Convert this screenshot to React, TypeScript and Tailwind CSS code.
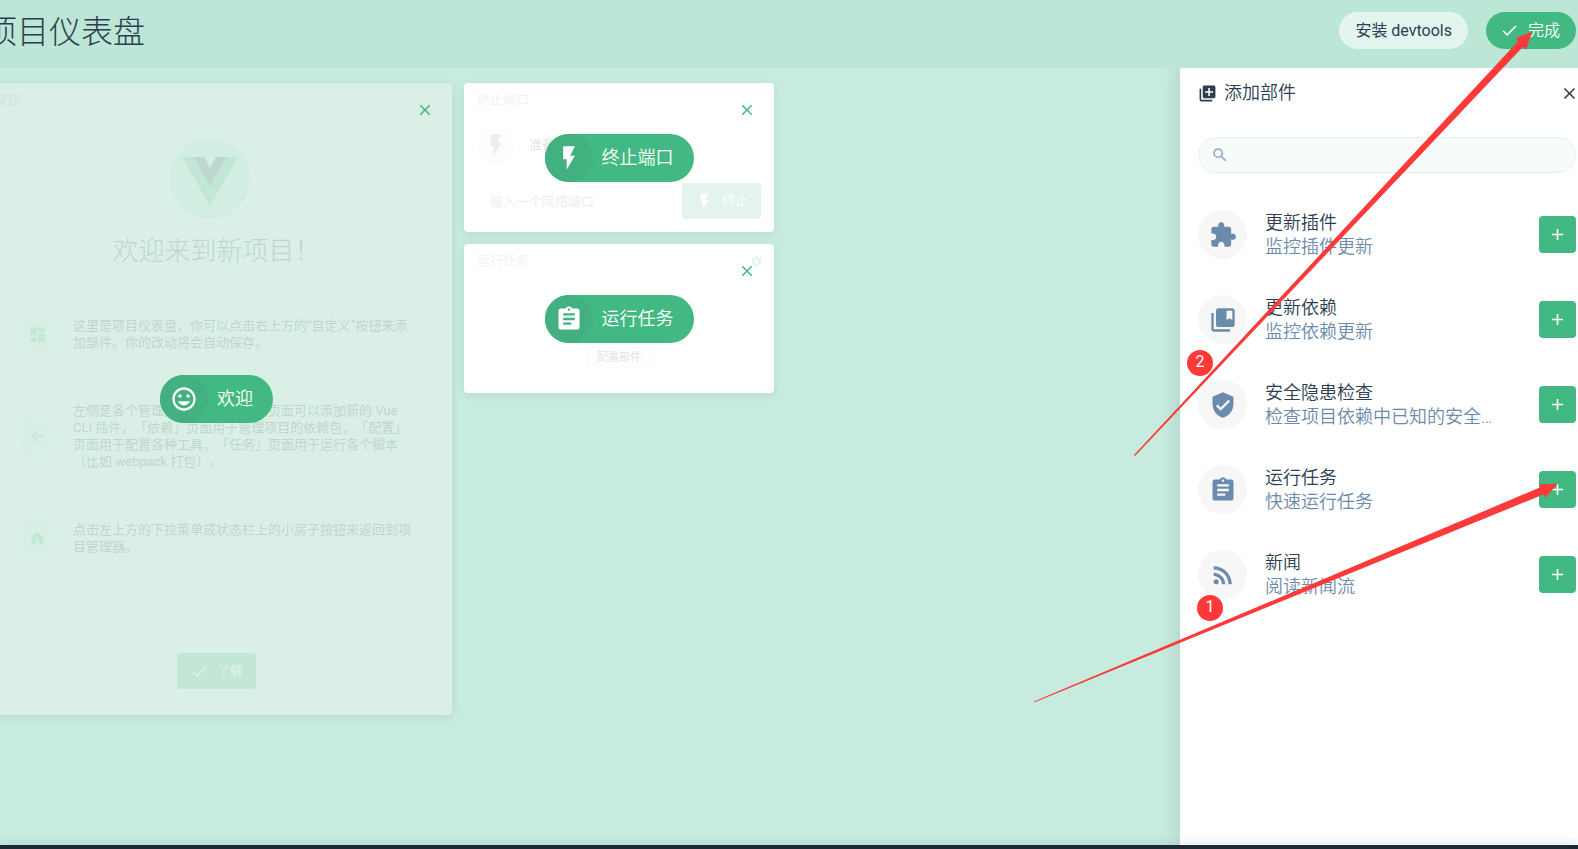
import { ReactNode, useState } from 'react';
import { IconType } from 'react-icons';
import {
  MdAdd,
  MdArrowBack,
  MdAssignment,
  MdClose,
  MdCollectionsBookmark,
  MdDashboard,
  MdDone,
  MdExtension,
  MdFlashOn,
  MdHome,
  MdInsertEmoticon,
  MdLibraryAdd,
  MdRssFeed,
  MdSearch,
  MdSettings,
  MdVerifiedUser,
} from 'react-icons/md';

interface WidgetDefinition {
  title: string;
  description: string;
  icon: IconType;
}

const definitions: WidgetDefinition[] = [
  { title: '更新插件', description: '监控插件更新', icon: MdExtension },
  { title: '更新依赖', description: '监控依赖更新', icon: MdCollectionsBookmark },
  { title: '安全隐患检查', description: '检查项目依赖中已知的安全隐患', icon: MdVerifiedUser },
  { title: '运行任务', description: '快速运行任务', icon: MdAssignment },
  { title: '新闻', description: '阅读新闻流', icon: MdRssFeed },
];

const tips: { icon: IconType; text: string }[] = [
  { icon: MdDashboard, text: '这里是项目仪表盘，你可以点击右上方的“自定义”按钮来添加部件。你的改动将会自动保存。' },
  {
    icon: MdArrowBack,
    text: '左侧是各个管理页面，在「插件」页面可以添加新的 Vue CLI 插件，「依赖」页面用于管理项目的依赖包，「配置」页面用于配置各种工具，「任务」页面用于运行各个脚本（比如 webpack 打包）。',
  },
  { icon: MdHome, text: '点击左上方的下拉菜单或状态栏上的小房子按钮来返回到项目管理器。' },
];

function VueLogo() {
  return (
    <svg viewBox="0 0 80 80" className="w-20 h-20" aria-hidden="true">
      <circle cx="40" cy="40" r="40" fill="#42b983" fillOpacity="0.3" />
      <path d="M12 18h11l17 29 17-29h11L40 67z" fill="#42b983" />
      <path d="M23 18h11l6 11 6-11h11L40 47z" fill="#35495e" />
    </svg>
  );
}

interface WidgetProps {
  title: string;
  icon: IconType;
  className: string;
  children: ReactNode;
  configurable?: boolean;
}

function Widget({ title, icon: Icon, className, children, configurable }: WidgetProps) {
  return (
    <section className={`relative rounded shadow-[0_2px_10px_rgba(0,0,0,0.08)] ${className}`}>
      <div className="h-full flex flex-col opacity-15">
        <div className="flex items-center justify-between pl-[13px] pr-[11px] h-[34px] text-[13px]">
          <span className="opacity-50">{title}</span>
          {configurable && <MdSettings className="w-[13px] h-[13px] text-[#42b983]" />}
        </div>
        {children}
      </div>

      {/* customize overlay */}
      <div className="absolute inset-0 flex items-center justify-center">
        <div className="flex items-center h-12 rounded-full bg-[#42b983] text-white text-lg pr-5">
          <span className="w-12 h-12 rounded-full bg-[#42b07f] flex items-center justify-center mr-[9px]">
            <Icon className="w-7 h-7" />
          </span>
          {title}
        </div>
        <button
          aria-label={`移除${title}`}
          className="absolute top-[9px] right-[9px] w-9 h-9 flex items-center justify-center text-[#42b983]"
        >
          <MdClose className="w-[18px] h-[18px]" />
        </button>
      </div>
    </section>
  );
}

function WelcomeWidget() {
  return (
    <Widget
      title="欢迎"
      icon={MdInsertEmoticon}
      className="col-span-3 row-span-4 bg-[#daf0e6]"
    >
      <div className="flex-1 flex flex-col items-center pt-[22px] pb-[26px]">
        <div className="pr-[14px]">
          <VueLogo />
        </div>
        <h2 className="text-[26px] leading-9 font-light mt-[14px]">欢迎来到新项目！</h2>
        <ul className="w-full flex-1 px-[39px] pt-[14px]">
          {tips.map(({ icon: Icon, text }) => (
            <li key={text} className="h-[102px] flex items-center">
              <span className="w-[34px] h-[34px] shrink-0 rounded-full bg-[#42b983]/5 flex items-center justify-center text-[#42b983]">
                <Icon className="w-[19px] h-[19px]" />
              </span>
              <p className="flex-1 ml-[19px] text-[13px] leading-[17px] font-normal">{text}</p>
            </li>
          ))}
        </ul>
        <button className="h-9 px-[13px] rounded-sm bg-[#42b983] text-white text-[13px] flex items-center gap-2">
          <MdDone className="w-[19px] h-[19px]" />
          了解
        </button>
      </div>
    </Widget>
  );
}

function KillPortWidget() {
  const [port, setPort] = useState('');

  return (
    <Widget title="终止端口" icon={MdFlashOn} className="col-span-2 bg-white">
      <div className="flex items-center px-[13px] pt-[9px]">
        <span className="w-[38px] h-[38px] rounded-full bg-[#f7f7f7] flex items-center justify-center text-[#6b8bad]">
          <MdFlashOn className="w-[26px] h-[26px]" />
        </span>
        <span className="ml-[14px] text-[13px]">准备终止</span>
      </div>
      <div className="flex items-center gap-[14px] px-[13px] mt-auto pb-[13px]">
        <input
          aria-label="输入一个网络端口"
          placeholder="输入一个网络端口"
          value={port}
          onChange={(e) => setPort(e.target.value)}
          className="flex-1 min-w-0 h-9 px-3 border border-[#42b983]/10 rounded-sm text-[13px] placeholder:text-[#6b8bad]"
        />
        <button className="h-9 px-[13px] rounded-sm bg-[#42b983] text-white text-[13px] flex items-center gap-2">
          <MdFlashOn className="w-[19px] h-[19px]" />
          终止
        </button>
      </div>
    </Widget>
  );
}

function RunTaskWidget() {
  return (
    <Widget title="运行任务" icon={MdAssignment} className="col-span-2 bg-white" configurable>
      <div className="flex-1 flex items-end justify-center pb-[23px]">
        <button className="h-6 px-3 rounded-sm bg-[#42b983]/10 text-[11px]">配置部件</button>
      </div>
    </Widget>
  );
}

function AddWidgetPane() {
  const [search, setSearch] = useState('');

  return (
    <aside className="w-[398px] shrink-0 bg-white pl-[18px] pr-[2px] shadow-[0_0_20px_rgba(0,0,0,0.15)]">
      <div className="flex items-center h-[50px]">
        <MdLibraryAdd className="w-[19px] h-[19px]" />
        <h2 className="ml-[7px] flex-1 text-lg">添加部件</h2>
        <button aria-label="关闭" className="-mr-[3px]">
          <MdClose className="w-[19px] h-[19px]" />
        </button>
      </div>

      <label className="mt-[19px] h-9 flex items-center px-3 rounded-full border border-[#e0f4ec] bg-[#f7fbfa]">
        <MdSearch className="w-[18px] h-[18px] text-[#8ba6c3]" />
        <input
          aria-label="搜索部件"
          value={search}
          onChange={(e) => setSearch(e.target.value)}
          className="flex-1 ml-2 bg-transparent outline-none"
        />
      </label>

      <ul className="mt-[19px]">
        {definitions.map(({ title, description, icon: Icon }) => (
          <li key={title} className="h-[85px] flex items-center">
            <span className="w-[49px] h-[49px] shrink-0 rounded-full bg-[#f7f7f7] flex items-center justify-center text-[#6b8bad]">
              <Icon className="w-7 h-7" />
            </span>
            <div className="flex-1 min-w-0 ml-[18px] mr-8 text-lg leading-6">
              <div>{title}</div>
              <div className="truncate text-[#6b8bad]">{description}</div>
            </div>
            <button
              aria-label={`添加${title}`}
              className="w-[37px] h-[37px] rounded-sm bg-[#42b983] text-white flex items-center justify-center"
            >
              <MdAdd className="w-[19px] h-[19px]" />
            </button>
          </li>
        ))}
      </ul>
    </aside>
  );
}

// Step markers pointing at the controls, anchored to the right edge of the page
function Annotations() {
  return (
    <div className="absolute z-20 top-0 right-0 w-[578px] h-[720px] pointer-events-none font-normal">
      <svg viewBox="1000 0 578 720" className="w-full h-full" fill="#fc3a39" aria-hidden="true">
        <path d="M1134 455L1518 41.3L1515.7 38.3L1532 32L1526 49.7L1523 46.7L1135 456z" />
        <path d="M1034 701.5L1540.3 487.3L1539 484.3L1557.7 483.7L1545.3 497.7L1543.8 494.3L1034 702.5z" />
      </svg>
      <span className="absolute top-[350px] left-[187px] w-[26px] h-[26px] rounded-full bg-[#fc3a39] text-white text-base leading-6 text-center">
        2
      </span>
      <span className="absolute top-[595px] left-[197px] w-[26px] h-[26px] rounded-full bg-[#fc3a39] text-white text-base leading-6 text-center">
        1
      </span>
    </div>
  );
}

export default function App() {
  return (
    <div className="relative min-h-screen overflow-hidden flex flex-col bg-[#c7ebdf] text-[#2c3e50] font-[Roboto,'Noto_Sans_CJK_SC',sans-serif] font-[350] [text-spacing-trim:space-all]">
      <header className="relative z-10 h-[68px] bg-[#bce6d5] flex items-start pt-3 pr-[2px]">
        <h1 className="flex-1 -ml-[15px] text-[32px] leading-10 font-light">项目仪表盘</h1>
        <button className="h-[37px] px-4 rounded-full bg-[#e4f5ef] text-base font-normal">安装 devtools</button>
        <button className="h-[37px] ml-[18px] px-[14px] rounded-full bg-[#42b983] text-white text-base flex items-center gap-[9px]">
          <MdDone className="w-[19px] h-[19px]" />
          <span className="pr-[2px]">完成</span>
        </button>
      </header>

      <div className="flex-1 flex">
        <main className="flex-1 min-w-0 -ml-[19px] pt-[15px]">
          <div className="grid grid-cols-[repeat(5,149px)] auto-rows-[149px] gap-3">
            <WelcomeWidget />
            <KillPortWidget />
            <RunTaskWidget />
          </div>
        </main>
        <AddWidgetPane />
      </div>

      <footer className="relative h-1 bg-[#1d2935] shadow-[0_-2px_10px_rgba(0,0,0,0.15)]" />
      <Annotations />
    </div>
  );
}
